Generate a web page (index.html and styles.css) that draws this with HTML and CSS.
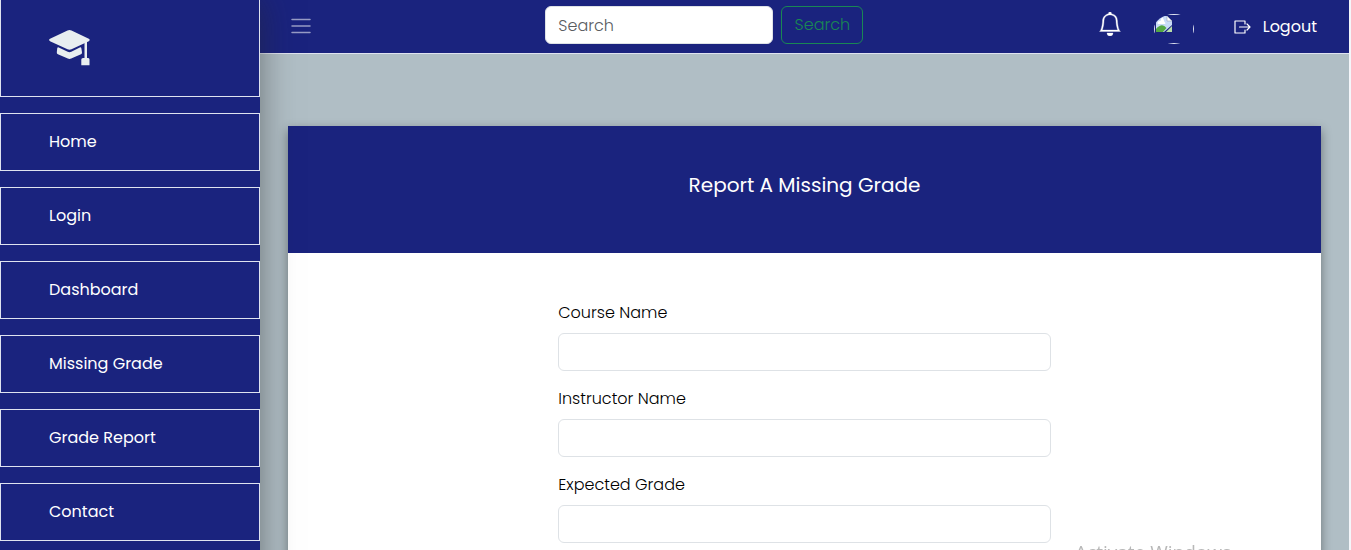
FILE: index.html
```html
<!DOCTYPE html>
<html lang="en">
<head>
<meta charset="utf-8">
<meta name="viewport" content="width=device-width, initial-scale=1">
<title>Report A Missing Grade</title>
<link rel="stylesheet" href="styles.css">
</head>
<body>
<div class="layout">
  <nav class="sidebar" aria-label="Main">
    <a class="brand" href="#" aria-label="School home">
      <svg class="brand-icon" viewBox="0 0 41 36" fill="currentColor" aria-hidden="true">
        <path d="M18.500 .6Q20.500-.4 22.500 .6L39.800 8.800Q41.600 10 39.800 11.200L22.500 19.300Q20.500 20.200 18.500 19.300L1 11.200Q-.8 10 1 8.800Z"/>
        <path d="M9.200 17.300L18.700 21.800Q20.500 22.600 22.300 21.800L31.300 17.300Q32.200 17.400 32.400 18.500L33 22.300Q33.200 23.700 32 24.300L22.200 28.600Q20.500 29.400 18.800 28.600L8.900 24.300Q7.600 23.700 7.800 22.300L8.200 18.500Q8.400 17.400 9.200 17.300Z"/>
        <path d="M35.500 11H38V28H39.200Q40.500 28 40.500 29.500V35.200H32.300V29.500Q32.300 28 34 28H35.500Z"/>
      </svg>
    </a>
    <a class="nav-item" href="#">Home</a>
    <a class="nav-item" href="#">Login</a>
    <a class="nav-item" href="#">Dashboard</a>
    <a class="nav-item" href="#">Missing Grade</a>
    <a class="nav-item" href="#">Grade Report</a>
    <a class="nav-item" href="#">Contact</a>
  </nav>

  <div class="page">
    <header class="topbar">
      <button class="toggle" type="button" aria-label="Toggle menu">
        <svg class="toggle-icon" viewBox="0 0 20 16" fill="none" stroke="currentColor" stroke-width="1.500" stroke-linecap="round" aria-hidden="true"><path d="M1 1.500H19M1 8H19M1 14.500H19"/></svg>
      </button>
      <form class="search" role="search">
        <input class="field search-field" type="search" placeholder="Search" aria-label="Search">
        <button class="search-button" type="button">Search</button>
      </form>
      <div class="account">
        <button class="bell" type="button" aria-label="Notifications">
          <svg class="bell-icon" viewBox="0 0 16 16" fill="currentColor" stroke="currentColor" stroke-width=".2" aria-hidden="true"><path d="M8 16a2 2 0 0 0 2-2H6a2 2 0 0 0 2 2zM8 1.918l-.797.161A4.002 4.002 0 0 0 4 6c0 .628-.134 2.197-.459 3.742-.16.767-.376 1.566-.663 2.258h10.244c-.287-.692-.502-1.490-.663-2.258C12.134 8.197 12 6.628 12 6a4.002 4.002 0 0 0-3.203-3.920L8 1.917zM14.220 12c.223.447.481.801.780 1H1c.299-.199.557-.553.780-1C2.680 10.200 3 6.880 3 6c0-2.420 1.720-4.440 4.005-4.901a1 1 0 1 1 1.990 0A5.002 5.002 0 0 1 13 6c0 .880.320 4.200 1.220 6z"/></svg>
        </button>
        <svg class="avatar" viewBox="0 0 40 30" role="img" aria-label="Profile">
          <clipPath id="avatar-clip"><ellipse cx="20" cy="15" rx="20" ry="15"/></clipPath>
          <g clip-path="url(#avatar-clip)">
            <path d="M.5 .5H39.500V29.500H.5Z" fill="none" stroke="#e3e6f2"/>
            <path d="M2 2H13L18 7V11L10 18H2Z" fill="#c9dcf8"/>
            <path d="M13 2V7H18Z" fill="#fff" stroke="#98a2b5" stroke-width=".6"/>
            <path d="M3.500 9Q4 6.500 6.500 7Q8-.5 10.500 8Q12 9 11 10H4Z" fill="#fff"/>
            <path d="M2 18V15Q8 8 12.500 14L9 18Z" fill="#54a844"/>
            <path d="M12 18L18 12V18Z" fill="#b9dca9"/>
          </g>
        </svg>
        <a class="logout" href="#">
          <svg class="logout-icon" viewBox="0 0 17 14" fill="none" stroke="currentColor" stroke-width="1.200" stroke-linejoin="round" stroke-linecap="round" aria-hidden="true"><path d="M11 4V1H1V13H11V10M5.500 7H16M13 4L16 7L13 10"/></svg>
          <span>Logout</span>
        </a>
      </div>
    </header>

    <main class="content">
      <section class="card">
        <h1 class="card-title">Report A Missing Grade</h1>
        <form class="report-form">
          <div class="form-group">
            <label for="course">Course Name</label>
            <input class="field" id="course" type="text">
          </div>
          <div class="form-group">
            <label for="instructor">Instructor Name</label>
            <input class="field" id="instructor" type="text">
          </div>
          <div class="form-group">
            <label for="grade">Expected Grade</label>
            <input class="field" id="grade" type="text">
          </div>
        </form>
      </section>
    </main>
  </div>
</div>
<div class="watermark">Activate Windows</div>
</body>
</html>
```

FILE: styles.css
```css
* { box-sizing: border-box; }

body {
  margin: 0;
  height: 100vh;
  overflow: hidden;
  background: #f4f6fa;
  color: #000;
  font-family: Poppins, Inter, sans-serif;
  font-size: 16px;
  font-weight: 300;
  line-height: 24px;
}

button, input { font: inherit; }

button {
  padding: 0;
  border: 0;
  background: none;
  color: inherit;
  cursor: pointer;
}

a { color: inherit; text-decoration: none; }

svg { display: block; }

.layout {
  display: flex;
  min-height: 100vh;
  margin-right: 2px;
  background: #b0bec5;
}

.sidebar {
  position: relative;
  z-index: 1;
  display: flex;
  flex: 0 0 260px;
  flex-direction: column;
  gap: 16px;
  background: #1a237e;
  box-shadow: 0 0 32px rgba(40, 40, 40, 0.5);
  color: #fff;
  font-weight: 400;
}

.brand {
  padding: 30px 48px;
  border: 1px solid #dfe3f0;
  border-top: 0;
  color: #e8eef0;
}

.brand-icon { width: 41px; height: 36px; }

.nav-item {
  padding: 16px 48px;
  border: 1px solid #dfe3f0;
}

.page {
  display: flex;
  flex: 1;
  flex-direction: column;
  min-width: 0;
}

.topbar {
  display: flex;
  align-items: center;
  justify-content: space-between;
  padding: 6px 32px 9px 31px;
  border-bottom: 1px solid #dfe3f0;
  background: #1a237e;
  color: #fff;
}

.toggle {
  padding-top: 2px;
  color: rgba(255, 255, 255, 0.55);
}

.toggle-icon { width: 20px; height: 16px; }

.search { display: flex; gap: 8px; }

.field {
  width: 100%;
  height: 38px;
  padding: 6px 12px;
  border: 1px solid #dee2e6;
  border-radius: 6px;
  background: #fff;
  color: #212529;
}

.search-field { width: 228px; }

.search-field::placeholder { color: #595c5f; opacity: 1; }

.search-button {
  width: 82px;
  border: 1px solid #198754;
  border-radius: 6px;
  color: #198754;
}

.account { display: flex; align-items: center; }

.bell { margin: 0 32px 2px 0; }

.bell-icon { width: 24px; height: 24px; }

.avatar {
  width: 40px;
  height: 30px;
  margin: 8px 40px 0 0;
}

.logout {
  display: flex;
  align-items: center;
  gap: 12px;
  padding-top: 4px;
  font-weight: 400;
}

.logout-icon { width: 17px; height: 14px; }

.content {
  display: flex;
  flex: 1;
  padding: 72px 28px 0;
}

.card {
  flex: 1;
  background: #fff;
  box-shadow: 0 4px 10px rgba(0, 0, 0, 0.4);
}

.card-title {
  margin: 0;
  padding: 48px 24px 56px;
  background: #1a237e;
  color: #fff;
  font-size: 20px;
  font-weight: 400;
  line-height: 23px;
  text-align: center;
}

.report-form {
  display: grid;
  gap: 16px;
  width: 50%;
  margin: 0 auto;
  padding: 48px 12px;
}

.form-group { display: grid; gap: 8px; }

.watermark {
  position: fixed;
  right: 120px;
  bottom: -16px;
  color: #b8b8b8;
  font-family: "Segoe UI", "Open Sans", sans-serif;
  font-size: 19px;
  font-weight: 400;
  line-height: 28px;
  pointer-events: none;
}
```
